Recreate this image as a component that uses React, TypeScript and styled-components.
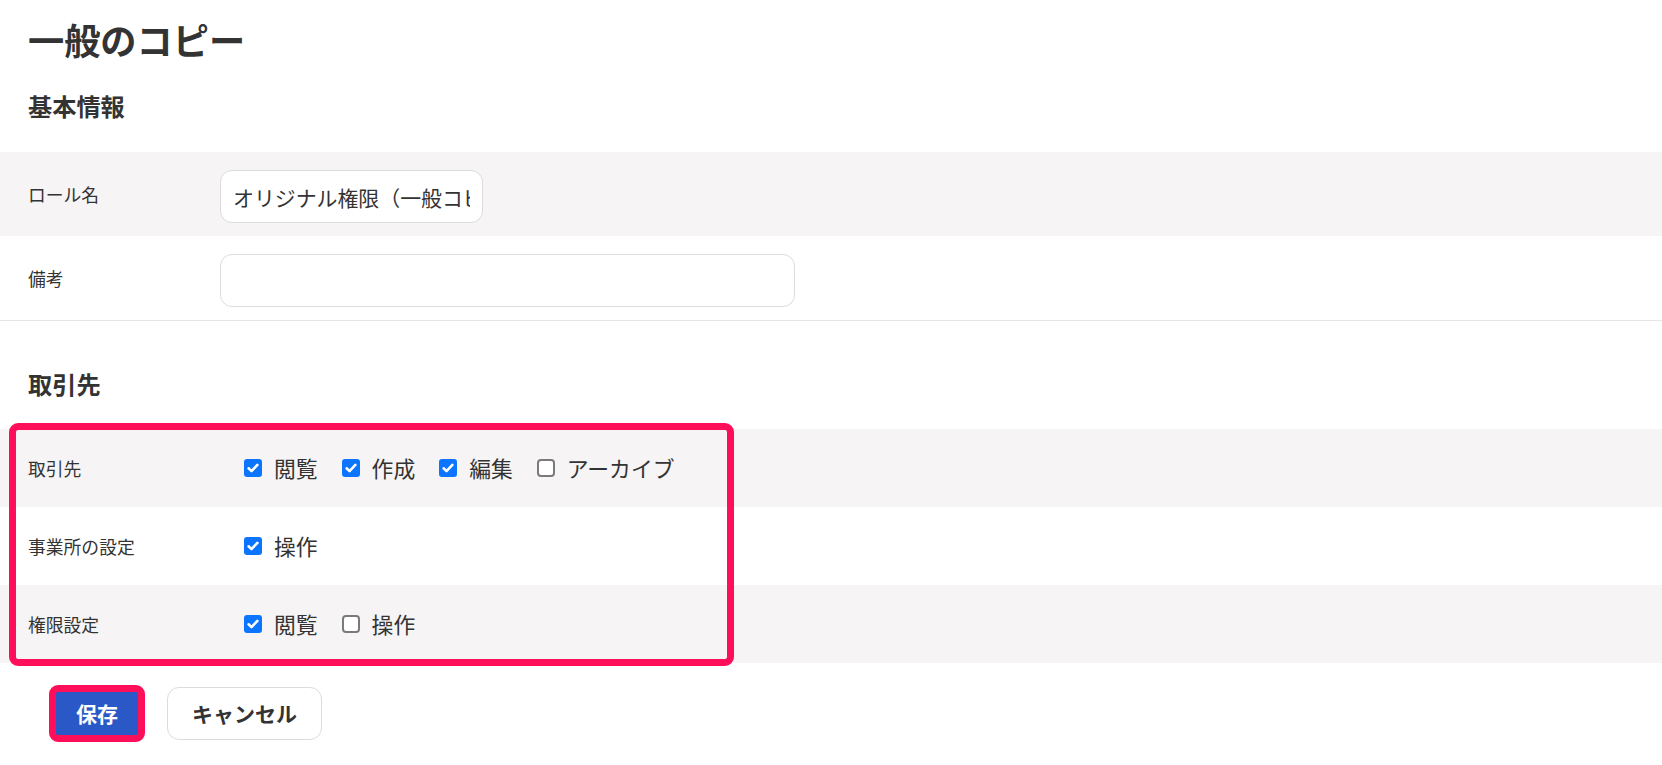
import React from "react";
import styled, { createGlobalStyle } from "styled-components";

const GlobalStyle = createGlobalStyle`
  html, body {
    margin: 0;
    padding: 0;
    background: #ffffff;
  }
  body {
    font-family: "Noto Sans CJK JP", "Noto Sans", sans-serif;
    color: #333333;
  }
  *, *::before, *::after {
    box-sizing: border-box;
  }
`;

const Page = styled.main`
  width: 100%;
  min-height: 765px;
  background: #ffffff;
`;

const Title = styled.h1`
  margin: 0;
  padding: 15px 28px 0;
  font-size: 36.2px;
  line-height: 48px;
  font-weight: 700;
  color: #333333;
`;

const SectionHeading = styled.h2<{ $top: number; $bottom: number }>`
  margin: 0;
  padding: ${(p) => p.$top}px 28px ${(p) => p.$bottom}px;
  font-size: 24.2px;
  line-height: 48px;
  font-weight: 700;
  color: #333333;
`;

const FieldList = styled.div`
  border-bottom: 1px solid #e6e4e5;
`;

const FieldRow = styled.div<{ $shaded?: boolean }>`
  display: grid;
  grid-template-columns: 192px 1fr;
  align-items: center;
  min-height: 84px;
  padding-left: 28px;
  background: ${(p) => (p.$shaded ? "#f6f4f5" : "#ffffff")};
`;

const FieldLabel = styled.label`
  font-size: 17.8px;
  line-height: 1.5;
  color: #333333;
`;

const TextInput = styled.input<{ $width: number }>`
  width: ${(p) => p.$width}px;
  height: 53px;
  margin: 5px 0 0;
  padding: 0 12px;
  border: 1px solid #dcdcdc;
  border-radius: 12px;
  background: #ffffff;
  font-family: inherit;
  font-size: 20.9px;
  color: #333333;
  outline: none;
`;

const PermissionArea = styled.div`
  position: relative;
`;

const PermRow = styled.div<{ $shaded?: boolean }>`
  display: grid;
  grid-template-columns: 192px 1fr;
  align-items: center;
  height: 78px;
  padding-left: 28px;
  background: ${(p) => (p.$shaded ? "#f6f4f5" : "#ffffff")};
`;

const RowLabel = styled.span`
  font-size: 17.8px;
  line-height: 1.5;
  color: #333333;
`;

const CheckGroup = styled.div`
  display: flex;
  align-items: center;
  gap: 24px;
  padding-left: 24px;
`;

const CheckItem = styled.label`
  display: inline-flex;
  align-items: center;
  gap: 12px;
  font-size: 21.8px;
  line-height: 1.5;
  color: #333333;
  cursor: pointer;
`;

const HiddenInput = styled.input`
  position: absolute;
  width: 1px;
  height: 1px;
  margin: 0;
  opacity: 0;
  pointer-events: none;
`;

const Box = styled.span<{ $checked: boolean }>`
  display: inline-flex;
  align-items: center;
  justify-content: center;
  flex: none;
  width: 18px;
  height: 18px;
  border-radius: ${(p) => (p.$checked ? 3 : 4)}px;
  background: ${(p) => (p.$checked ? "#0b75ff" : "#ffffff")};
  border: ${(p) => (p.$checked ? "none" : "2px solid #7a7a7a")};
`;

const Highlight = styled.div<{ $inset: string; $radius: number }>`
  position: absolute;
  inset: ${(p) => p.$inset};
  border: 7px solid #ff0f5a;
  border-radius: ${(p) => p.$radius}px;
  pointer-events: none;
`;

const Actions = styled.div`
  display: flex;
  align-items: center;
  gap: 24px;
  padding: 24px 0 0 51px;
`;

const SaveWrap = styled.div`
  position: relative;
  display: inline-flex;
`;

const Button = styled.button<{ $primary?: boolean }>`
  height: 53px;
  padding: 0 24px;
  border: 1px solid ${(p) => (p.$primary ? "#2a58c6" : "#dcdcdc")};
  border-radius: ${(p) => (p.$primary ? 6 : 12)}px;
  background: ${(p) => (p.$primary ? "#2a58c6" : "#ffffff")};
  color: ${(p) => (p.$primary ? "#ffffff" : "#333333")};
  font-family: inherit;
  font-size: 21px;
  font-weight: 700;
  line-height: 1;
  cursor: pointer;
`;

type Perm = { label: string; checked: boolean };

const Check: React.FC<Perm> = ({ label, checked }) => (
  <CheckItem>
    <HiddenInput type="checkbox" defaultChecked={checked} />
    <Box $checked={checked} aria-hidden="true">
      {checked && (
        <svg width="18" height="18" viewBox="0 0 18 18">
          <path
            d="M4.6 9.3 L7.5 12.1 L13.4 5.9"
            fill="none"
            stroke="#ffffff"
            strokeWidth="2.6"
            strokeLinecap="round"
            strokeLinejoin="round"
          />
        </svg>
      )}
    </Box>
    {label}
  </CheckItem>
);

const permissionRows: { name: string; perms: Perm[] }[] = [
  {
    name: "取引先",
    perms: [
      { label: "閲覧", checked: true },
      { label: "作成", checked: true },
      { label: "編集", checked: true },
      { label: "アーカイブ", checked: false },
    ],
  },
  {
    name: "事業所の設定",
    perms: [{ label: "操作", checked: true }],
  },
  {
    name: "権限設定",
    perms: [
      { label: "閲覧", checked: true },
      { label: "操作", checked: false },
    ],
  },
];

export default function App() {
  return (
    <>
      <GlobalStyle />
      <Page>
        <Title>一般のコピー</Title>

        <SectionHeading $top={19} $bottom={22}>
          基本情報
        </SectionHeading>
        <FieldList>
          <FieldRow $shaded>
            <FieldLabel htmlFor="role-name">ロール名</FieldLabel>
            <div>
              <TextInput
                id="role-name"
                $width={263}
                defaultValue="オリジナル権限（一般コピー）"
              />
            </div>
          </FieldRow>
          <FieldRow>
            <FieldLabel htmlFor="note">備考</FieldLabel>
            <div>
              <TextInput id="note" $width={575} defaultValue="" />
            </div>
          </FieldRow>
        </FieldList>

        <SectionHeading $top={39} $bottom={21}>
          取引先
        </SectionHeading>
        <PermissionArea>
          {permissionRows.map((row, i) => (
            <PermRow key={row.name} $shaded={i % 2 === 0}>
              <RowLabel>{row.name}</RowLabel>
              <CheckGroup>
                {row.perms.map((p) => (
                  <Check key={p.label} label={p.label} checked={p.checked} />
                ))}
              </CheckGroup>
            </PermRow>
          ))}
          <Highlight $inset="-6px auto -3px 9px" $radius={9} style={{ width: 725 }} />
        </PermissionArea>

        <Actions>
          <SaveWrap>
            <Button $primary>保存</Button>
            <Highlight $inset="-2px" $radius={9} />
          </SaveWrap>
          <Button>キャンセル</Button>
        </Actions>
      </Page>
    </>
  );
}
